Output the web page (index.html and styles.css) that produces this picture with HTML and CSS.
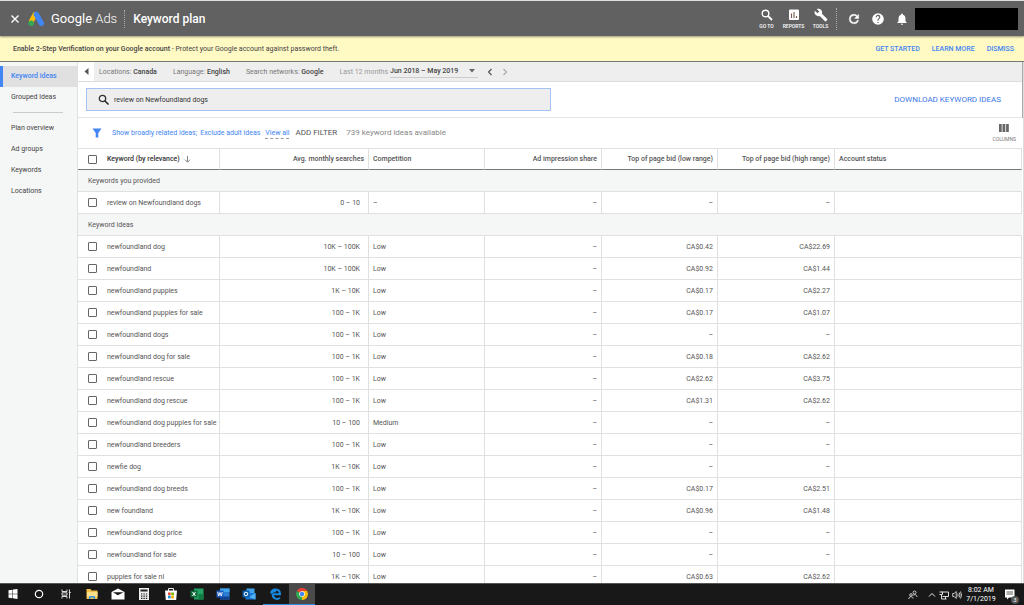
FILE: index.html
```html
<!DOCTYPE html>
<html lang="en">
<head>
<meta charset="utf-8">
<title>Google Ads - Keyword plan</title>
<link rel="stylesheet" href="styles.css">
</head>
<body>
<header class="topbar">
  <button class="icon-btn close" aria-label="Close"><svg width="10" height="10" viewBox="0 0 10 10"><path d="M1.500 1.500l7 7M8.500 1.500l-7 7" stroke="#fff" stroke-width="1.400"/></svg></button>
  <svg class="logo" width="17" height="16" viewBox="0 0 17 16"><path d="M7 3.500L3.500 10" stroke="#fbbc04" stroke-width="5" stroke-linecap="round"/><path d="M8.300 3.300l5 9" stroke="#4285f4" stroke-width="5.400" stroke-linecap="round"/><circle cx="3.200" cy="12.300" r="2.800" fill="#34a853"/></svg>
  <span class="brand">Google <span class="brand-ads">Ads</span></span>
  <h1 class="title">Keyword plan</h1>
  <nav class="tools">
    <button class="tool"><svg width="14" height="14" viewBox="0 0 14 14" fill="none" stroke="#fff"><circle cx="5.500" cy="5.500" r="3.300" stroke-width="1.400"/><path d="M8 8l4 4" stroke-width="1.800"/></svg><span>GO TO</span></button>
    <button class="tool"><svg width="14" height="14" viewBox="0 0 14 14"><rect x="2" y="1.500" width="10" height="10.500" rx="1" fill="#fff"/><path d="M4.500 5.500V10M7 4v6M9.500 8v2" stroke="#7a5a4e" stroke-width="1.100"/></svg><span>REPORTS</span></button>
    <button class="tool"><svg width="14" height="14" viewBox="0 0 24 24"><path fill="#fff" d="M22.700 19l-9.100-9.100c.9-2.300.4-5-1.500-6.900-2-2-5-2.400-7.400-1.300L9 6 6 9 1.600 4.700C.4 7.100.9 10.100 2.900 12.100c1.900 1.900 4.600 2.400 6.900 1.500l9.100 9.100c.4.4 1 .4 1.400 0l2.300-2.300c.5-.4.5-1.100.1-1.400z"/></svg><span>TOOLS</span></button>
  </nav>
  <div class="actions">
    <button class="icon-btn" aria-label="Refresh"><svg width="14" height="14" viewBox="0 0 24 24"><path fill="#fff" stroke="#fff" stroke-width=".8" d="M17.650 6.350A7.960 7.960 0 0 0 12 4a8 8 0 1 0 7.730 10h-2.080A6 6 0 1 1 12 6c1.660 0 3.140.69 4.220 1.780L13 11h7V4z"/></svg></button>
    <button class="icon-btn" aria-label="Help"><svg width="14" height="14" viewBox="0 0 24 24"><path fill="#fff" d="M12 2a10 10 0 1 0 0 20 10 10 0 0 0 0-20zm1 17h-2v-2h2zm2.070-7.750l-.9.920C13.450 12.900 13 13.500 13 15h-2v-.5c0-1.100.45-2.100 1.170-2.830l1.240-1.260A2 2 0 1 0 10 9H8a4 4 0 1 1 7.070 2.250z"/></svg></button>
    <button class="icon-btn" aria-label="Notifications"><svg width="14" height="14" viewBox="0 0 24 24"><path fill="#fff" d="M12 22a2 2 0 0 0 2-2h-4c0 1.100.9 2 2 2zm6-6v-5c0-3.070-1.630-5.640-4.500-6.320V4a1.500 1.500 0 0 0-3 0v.68C7.640 5.360 6 7.920 6 11v5l-2 2v1h16v-1z"/></svg></button>
    <div class="account"></div>
  </div>
</header>
<div class="banner">
  <p><b>Enable 2-Step Verification on your Google account</b> - Protect your Google account against password theft.</p>
  <a href="#">GET STARTED</a><a href="#">LEARN MORE</a><a href="#">DISMISS</a>
</div>
<div class="main">
  <nav class="side">
    <a class="active" href="#">Keyword ideas</a>
    <a href="#">Grouped ideas</a>
    <hr>
    <a href="#">Plan overview</a>
    <a href="#">Ad groups</a>
    <a href="#">Keywords</a>
    <a href="#">Locations</a>
  </nav>
  <main class="content">
    <div class="scope">
      <button class="collapse" aria-label="Collapse"><svg width="5" height="7" viewBox="0 0 5 7"><path d="M4.500 0v7L.5 3.500z" fill="#555"/></svg></button>
      <span>Locations: <b>Canada</b></span>
      <span>Language: <b>English</b></span>
      <span>Search networks: <b>Google</b></span>
      <span class="period">Last 12 months <button class="range"><b>Jun 2018 – May 2019</b><svg width="6" height="4" viewBox="0 0 6 4"><path d="M0 0h6L3 3.500z" fill="#666"/></svg></button></span>
      <button class="icon-btn" aria-label="Previous"><svg width="6" height="8" viewBox="0 0 6 8" fill="none"><path d="M4.500 1L1.500 4l3 3" stroke="#555" stroke-width="1.200"/></svg></button>
      <button class="icon-btn next" aria-label="Next"><svg width="6" height="8" viewBox="0 0 6 8" fill="none"><path d="M1.500 1l3 3-3 3" stroke="#aaa" stroke-width="1.200"/></svg></button>
    </div>
    <div class="search">
      <label class="search-box"><svg width="12" height="12" viewBox="0 0 12 12" fill="none" stroke="#333"><circle cx="4.500" cy="4.500" r="3.200" stroke-width="1.300"/><path d="M7 7l3.500 3.500" stroke-width="1.700"/></svg><input type="text" aria-label="Keywords" value="review on Newfoundland dogs"></label>
      <button class="download">DOWNLOAD KEYWORD IDEAS</button>
    </div>
    <div class="filters">
      <svg width="10" height="10" viewBox="0 0 10 10"><path d="M.5.5h9L6.300 5v4.500H3.700V5z" fill="#4285f4"/></svg>
      <p class="filter-links"><a href="#">Show broadly related ideas;</a><a href="#">Exclude adult ideas</a><a class="view-all" href="#">View all</a></p>
      <button class="add">ADD FILTER</button>
      <span class="count">739 keyword ideas available</span>
      <button class="columns"><svg width="10" height="8" viewBox="0 0 10 8"><path d="M0 0h2.700v8H0zM3.500 0h2.800v8H3.500zM7.100 0h2.700v8H7.100z" fill="#666"/></svg><span>COLUMNS</span></button>
    </div>
    <table class="grid">
      <colgroup><col class="c-check"><col class="c-key"><col class="c-avg"><col class="c-mid"><col class="c-wide"><col class="c-mid"><col class="c-wide"><col></colgroup>
      <thead><tr><th><input type="checkbox" aria-label="Select all"></th><th class="sorted">Keyword (by relevance) <svg width="7" height="7" viewBox="0 0 7 7" fill="none"><path d="M3.500 0v6M1 3.700l2.500 2.500L6 3.700" stroke="#777" stroke-width=".9"/></svg></th><th class="num">Avg. monthly searches</th><th>Competition</th><th class="num">Ad impression share</th><th class="num">Top of page bid (low range)</th><th class="num">Top of page bid (high range)</th><th>Account status</th></tr></thead>
      <tbody>
      <tr class="group"><td colspan="8">Keywords you provided</td></tr>
      <tr><td><input type="checkbox" id="k0"></td><td><label for="k0">review on Newfoundland dogs</label></td><td>0 – 10</td><td>–</td><td>–</td><td>–</td><td>–</td><td></td></tr>
      <tr class="group"><td colspan="8">Keyword ideas</td></tr>
      <tr><td><input type="checkbox" id="k1"></td><td><label for="k1">newfoundland dog</label></td><td>10K – 100K</td><td>Low</td><td>–</td><td>CA$0.42</td><td>CA$22.69</td><td></td></tr>
      <tr><td><input type="checkbox" id="k2"></td><td><label for="k2">newfoundland</label></td><td>10K – 100K</td><td>Low</td><td>–</td><td>CA$0.92</td><td>CA$1.44</td><td></td></tr>
      <tr><td><input type="checkbox" id="k3"></td><td><label for="k3">newfoundland puppies</label></td><td>1K – 10K</td><td>Low</td><td>–</td><td>CA$0.17</td><td>CA$2.27</td><td></td></tr>
      <tr><td><input type="checkbox" id="k4"></td><td><label for="k4">newfoundland puppies for sale</label></td><td>100 – 1K</td><td>Low</td><td>–</td><td>CA$0.17</td><td>CA$1.07</td><td></td></tr>
      <tr><td><input type="checkbox" id="k5"></td><td><label for="k5">newfoundland dogs</label></td><td>100 – 1K</td><td>Low</td><td>–</td><td>–</td><td>–</td><td></td></tr>
      <tr><td><input type="checkbox" id="k6"></td><td><label for="k6">newfoundland dog for sale</label></td><td>100 – 1K</td><td>Low</td><td>–</td><td>CA$0.18</td><td>CA$2.62</td><td></td></tr>
      <tr><td><input type="checkbox" id="k7"></td><td><label for="k7">newfoundland rescue</label></td><td>100 – 1K</td><td>Low</td><td>–</td><td>CA$2.62</td><td>CA$3.75</td><td></td></tr>
      <tr><td><input type="checkbox" id="k8"></td><td><label for="k8">newfoundland dog rescue</label></td><td>100 – 1K</td><td>Low</td><td>–</td><td>CA$1.31</td><td>CA$2.62</td><td></td></tr>
      <tr><td><input type="checkbox" id="k9"></td><td><label for="k9">newfoundland dog puppies for sale</label></td><td>10 – 100</td><td>Medium</td><td>–</td><td>–</td><td>–</td><td></td></tr>
      <tr><td><input type="checkbox" id="k10"></td><td><label for="k10">newfoundland breeders</label></td><td>100 – 1K</td><td>Low</td><td>–</td><td>–</td><td>–</td><td></td></tr>
      <tr><td><input type="checkbox" id="k11"></td><td><label for="k11">newfie dog</label></td><td>1K – 10K</td><td>Low</td><td>–</td><td>–</td><td>–</td><td></td></tr>
      <tr><td><input type="checkbox" id="k12"></td><td><label for="k12">newfoundland dog breeds</label></td><td>100 – 1K</td><td>Low</td><td>–</td><td>CA$0.17</td><td>CA$2.51</td><td></td></tr>
      <tr><td><input type="checkbox" id="k13"></td><td><label for="k13">new foundland</label></td><td>1K – 10K</td><td>Low</td><td>–</td><td>CA$0.96</td><td>CA$1.48</td><td></td></tr>
      <tr><td><input type="checkbox" id="k14"></td><td><label for="k14">newfoundland dog price</label></td><td>100 – 1K</td><td>Low</td><td>–</td><td>–</td><td>–</td><td></td></tr>
      <tr><td><input type="checkbox" id="k15"></td><td><label for="k15">newfoundland for sale</label></td><td>10 – 100</td><td>Low</td><td>–</td><td>–</td><td>–</td><td></td></tr>
      <tr><td><input type="checkbox" id="k16"></td><td><label for="k16">puppies for sale nl</label></td><td>1K – 10K</td><td>Low</td><td>–</td><td>CA$0.63</td><td>CA$2.62</td><td></td></tr>
      </tbody>
    </table>
  </main>
</div>
<footer class="taskbar">
  <div class="apps">
    <button aria-label="Start"><svg width="14" height="14" viewBox="0 0 14 14"><path fill="#fff" d="M2.500 3.200l4-.5v4h-4zM7 2.600l4.500-.6v4.700H7zM2.500 7.200h4v4l-4-.5zM7 7.200h4.500V12L7 11.300z"/></svg></button>
    <button aria-label="Cortana"><svg width="14" height="14" viewBox="0 0 14 14"><circle cx="7" cy="7" r="3.700" fill="none" stroke="#fff" stroke-width="1.200"/></svg></button>
    <button aria-label="Task view"><svg width="14" height="14" viewBox="0 0 14 14" fill="none" stroke="#ddd"><path d="M3 2.500v2h5v-2M3 11.500v-2h5v2M3 5.800h5v2.400H3zM10.500 2.500v9M9.800 5.500h2"/></svg></button>
    <button aria-label="Files"><svg width="14" height="14" viewBox="0 0 14 14"><path d="M1.500 2h4l1 1.500h6V12h-11z" fill="#f2bd48"/><path d="M2 5h10.500v5H2z" fill="#ffe08a"/><path d="M4 12V9h6v3H8.500v-1.500h-3V12z" fill="#3f9be0"/></svg></button>
    <button aria-label="Mail"><svg width="14" height="14" viewBox="0 0 14 14"><path d="M.5 5L7 1.500 13.500 5v7.500H.5z" fill="#fff"/><path d="M2 5.200h10.500L6.800 8.200z" fill="#181818"/></svg></button>
    <button aria-label="Calculator"><svg width="14" height="14" viewBox="0 0 14 14"><path d="M2 1h10v12H2z" fill="#eee"/><path d="M3.500 2.500h7v2h-7z" fill="#222"/><path d="M4 7h6.500M4 9.200h6.500M4 11.400h6.500" stroke="#222" stroke-width="1.200" stroke-dasharray="1.400 1"/></svg></button>
    <button aria-label="Store"><svg width="14" height="14" viewBox="0 0 14 14"><path d="M4.500 4V1.500h5V4" fill="none" stroke="#eee"/><path d="M1 3.500h12l-.8 9.500H1.800z" fill="#fff"/><path d="M4 5.500h2.700v2.700H4z" fill="#e8502f"/><path d="M7.200 5.500H10v2.700H7.200z" fill="#7fba00"/><path d="M4 8.700h2.700v2.700H4z" fill="#1c8fe0"/><path d="M7.200 8.700H10v2.700H7.200z" fill="#f8b500"/></svg></button>
    <button aria-label="Excel"><svg width="14" height="14" viewBox="0 0 14 14"><path d="M4 1.500h9.500v11H4z" fill="#21a366"/><path d="M8.500 7h5v5.500h-5z" fill="#107c41"/><path d="M.5 3.500h7v7h-7z" fill="#0f6b38"/><path d="M2.500 5l3 4M5.500 5l-3 4" stroke="#fff"/></svg></button>
    <button aria-label="Word"><svg width="14" height="14" viewBox="0 0 14 14"><path d="M4 1.500h9.500v11H4z" fill="#2b7cd3"/><path d="M4 1.500h9.500V5H4z" fill="#41a5ee"/><path d="M4 9.500h9.500v3H4z" fill="#103f91"/><path d="M.5 3.500h7v7h-7z" fill="#185abd"/><path d="M1.700 5l1 4L4 5.500 5.300 9l1-4" fill="none" stroke="#fff" stroke-width=".9"/></svg></button>
    <button aria-label="Outlook"><svg width="14" height="14" viewBox="0 0 14 14"><path d="M4.500 1.500h8v6h-8z" fill="#41a5ee"/><path d="M3.500 6h10v6.500h-10z" fill="#1976d2"/><path d="M7 10l6.500-4v6.500z" fill="#50b0f0"/><path d="M.5 3.500h7v7h-7z" fill="#0a5cab"/><circle cx="4" cy="7" r="1.800" fill="none" stroke="#fff"/></svg></button>
    <button class="open" aria-label="Edge"><svg width="14" height="14" viewBox="0 0 14 14"><path d="M3.600 7.300H11C11 1.200 3 1.200 2 6.300M3.600 7.300c0 5 5 5.300 7.400 3.700M2 6.500C4 3.500 7 4.500 7 4.500" fill="none" stroke="#1688e0" stroke-width="2"/></svg></button>
    <button class="open current" aria-label="Chrome"><svg width="14" height="14" viewBox="0 0 14 14"><path d="M7 7L1.800 4A6 6 0 0 1 12.200 4z" fill="#ea4335"/><path d="M7 7L1.800 4A6 6 0 0 0 7 13z" fill="#34a853"/><path d="M7 7V13A6 6 0 0 0 12.200 4H7z" fill="#fbbc04"/><circle cx="7" cy="7" r="2.800" fill="#fff"/><circle cx="7" cy="7" r="2.200" fill="#4285f4"/></svg></button>
  </div>
  <div class="tray">
    <svg width="10" height="10" viewBox="0 0 10 10" fill="none" stroke="#ddd" stroke-width=".9"><circle cx="6.500" cy="2.500" r="1.500"/><circle cx="3" cy="5" r="1.300"/><path d="M.8 9c0-3 4-3 4.300-.5M5 5.500C6.500 4 8.500 4.500 9 7"/></svg>
    <svg class="chev" width="8" height="10" viewBox="0 0 8 10" fill="none" stroke="#eee"><path d="M1 6.500l3-3 3 3"/></svg>
    <svg width="10" height="10" viewBox="0 0 10 10" fill="none" stroke="#ddd"><path d="M2.500 2h7v4.500h-6M2.500 4.500V9M.5 2h3v2.500h-3M2.500 9h5M6.500 6.500V9"/></svg>
    <svg width="10" height="10" viewBox="0 0 10 10" fill="none" stroke="#ddd" stroke-width=".9"><path d="M.7 3.500h1.500l2-2v7l-2-2H.7zM5.700 3.500q1 1.500 0 3M7.200 2.500q1.700 2.500 0 5M8.500 1.500q2 3.500 0 7"/></svg>
    <div class="clock"><span>8:02 AM</span><span>7/1/2019</span></div>
    <button class="notes" aria-label="Notifications"><svg width="14" height="14" viewBox="0 0 14 14"><path d="M1 1.500h9.500v8H5L3 11.500v-2H1z" fill="#fff"/><path d="M2.500 4h6.500M2.500 6h6.500" stroke="#333" stroke-width=".8"/></svg><span class="badge">3</span></button>
  </div>
</footer>
</body>
</html>
```
FILE: styles.css
```css
* { box-sizing: border-box; }
body {
  margin: 0;
  height: 100vh;
  display: flex;
  flex-direction: column;
  overflow: hidden;
  font: 7px/10px Roboto, "Liberation Sans", sans-serif;
  color: #555;
  background: #fff;
}
button { border: 0; padding: 0; background: none; font: inherit; color: inherit; }
a { color: inherit; text-decoration: none; }
p, h1 { margin: 0; }
b { font-weight: 500; }
svg { display: block; flex: none; }

.topbar {
  flex: none;
  height: 36px;
  display: flex;
  align-items: center;
  padding-left: 10px;
  padding-right: 6px;
  border-top: 1px solid #e0e0e0;
  background: #616161;
  color: #fff;
  box-shadow: 0 1px 2px rgba(0, 0, 0, .4);
  z-index: 1;
}
.logo { margin-left: 8px; }
.brand { margin-left: 6px; font: 13px/18px Roboto, sans-serif; }
.brand-ads { font-weight: 300; }
.title {
  margin-left: 7px;
  padding-left: 8px;
  border-left: 1px dotted #aaa;
  font: 500 12px/18px Roboto, sans-serif;
}
.tools { display: flex; margin-left: auto; }
.tool {
  width: 27px;
  display: flex;
  flex-direction: column;
  align-items: center;
  gap: 1px;
  font-size: 5px;
  font-weight: 500;
  line-height: 6px;
}
.actions {
  display: flex;
  align-items: center;
  gap: 10px;
  margin-left: 2px;
  padding-left: 10px;
  border-left: 1px dotted #aaa;
}
.account { width: 103px; height: 22px; margin-left: -4px; background: #000; }

.banner {
  flex: none;
  height: 26px;
  display: flex;
  align-items: center;
  padding: 0 10px 0 13px;
  gap: 12px;
  border-bottom: 1px solid #777;
  background: #fff9c4;
  color: #444;
}
.banner p { margin-right: auto; }
.banner a { color: #4285f4; font-weight: 500; }

.main { flex: 1; min-height: 0; display: flex; }
.side {
  flex: none;
  width: 78px;
  padding-top: 4px;
  background: #f5f6f6;
  border-right: 1px solid #e0e0e0;
  color: #444;
}
.side a { display: block; padding: 5px 0 6px 11px; }
.side .active {
  padding: 5px 0 6px 8px;
  border-left: 3px solid #4285f4;
  background: #e0e0e0;
  color: #4285f4;
  font-weight: 500;
}
.side hr { margin: 4px 14px 5px 13px; border: 0; border-top: 1px solid #ccc; }

.content { flex: 1; min-width: 0; overflow: hidden; padding-right: 1px; border-right: 1px solid #ddd; }
.scope {
  height: 20px;
  display: flex;
  align-items: center;
  background: #eee;
  border-bottom: 1px solid #ddd;
  box-shadow: 1px 0 #aaa;
  color: #777;
}
.scope b { color: #444; }
.scope > span { margin-right: 16px; }
.scope .period { display: flex; align-items: center; gap: 2px; margin-right: 9px; color: #999; }
.collapse {
  align-self: stretch;
  width: 16px;
  margin-right: 5px;
  display: flex;
  align-items: center;
  justify-content: center;
  background: #fff;
}
.range {
  display: flex;
  align-items: center;
  justify-content: space-between;
  width: 88px;
  padding: 1px 3px 1px 0;
  border-bottom: 1px solid #ccc;
}
.next { margin-left: 9px; }

.search {
  height: 36px;
  display: flex;
  align-items: center;
  justify-content: space-between;
  padding: 0 21px 0 8px;
  border-bottom: 1px solid #e4e4e4;
  box-shadow: 1px 0 #aaa;
}
.search-box {
  width: 465px;
  height: 23px;
  display: flex;
  align-items: center;
  gap: 4px;
  padding-left: 11px;
  border: 1px solid #a4c2f4;
  background: #eee;
}
.search-box input {
  flex: 1;
  padding: 0;
  border: 0;
  outline: 0;
  background: none;
  font: 7px/10px Roboto, sans-serif;
  color: #333;
}
.download { color: #3b78e7; font-size: 8px; }

.filters {
  height: 30px;
  display: flex;
  align-items: center;
  padding: 0 6px 0 14px;
}
.filter-links { display: flex; gap: 3px; margin: 0 6px 0 10px; color: #4285f4; }
.view-all { margin-left: 2px; border-bottom: 1px dashed #999; }
.add { font-size: 8px; }
.count { margin-left: 9px; font-size: 8px; color: #888; }
.columns {
  margin-left: auto;
  display: flex;
  flex-direction: column;
  align-items: center;
  gap: 4px;
  font-size: 5px;
  line-height: 6px;
  color: #777;
}

.grid { width: 100%; table-layout: fixed; border-collapse: separate; border-spacing: 0; }
.c-check { width: 25px; }
.c-key { width: 117px; }
.c-avg { width: 149px; }
.c-mid { width: 116px; }
.c-wide { width: 117px; }
.grid th, .grid td {
  height: 22px;
  padding: 0 4px;
  border-right: 1px solid #e0e0e0;
  border-bottom: 1px solid #e0e0e0;
  text-align: left;
  font-weight: 400;
  white-space: nowrap;
}
.grid th {
  border-top: 1px solid #e0e0e0;
  border-bottom-color: #777;
  font-weight: 500;
}
.grid .num { text-align: right; }
.grid .sorted { color: #333; }
.sorted svg { display: inline-block; margin-left: 2px; vertical-align: middle; }
.grid th:first-child, .grid td:first-child { border-right: 0; padding: 0 0 0 10px; }
.grid td:nth-child(3) { text-align: right; padding-right: 8px; }
.grid td:nth-child(n+5) { text-align: right; }
.grid .group td { background: #f5f6f6; }
.grid input {
  display: block;
  appearance: none;
  width: 9px;
  height: 9px;
  margin: 0;
  border: 1px solid #666;
  border-radius: 1px;
}

.taskbar {
  flex: none;
  height: 22px;
  display: flex;
  justify-content: space-between;
  padding-right: 6px;
  border-top: 1px solid #555;
  background: #181818;
  color: #fff;
}
.apps { display: flex; width: 315px; }
.apps button {
  flex: 1;
  display: flex;
  align-items: center;
  justify-content: center;
  border-bottom: 1px solid transparent;
}
.apps .open { border-bottom-color: #2d8ce0; }
.apps .current { background: #4a4a4a; }
.tray { display: flex; align-items: center; gap: 3px; }
.chev { margin-left: 7px; }
.clock {
  display: flex;
  flex-direction: column;
  align-items: center;
  width: 32px;
  line-height: 9px;
}
.notes { position: relative; margin-left: 4px; }
.badge {
  position: absolute;
  right: -1px;
  bottom: -2px;
  width: 8px;
  height: 8px;
  border-radius: 50%;
  background: #555;
  font-size: 6px;
  line-height: 8px;
}
```
